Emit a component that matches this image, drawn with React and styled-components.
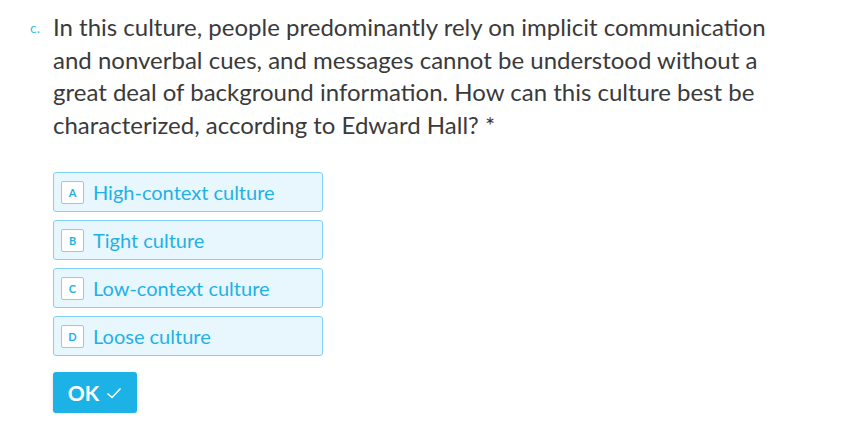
import React from "react";
import styled, { createGlobalStyle } from "styled-components";

const Global = createGlobalStyle`
  html, body { margin: 0; padding: 0; background: #ffffff; }
  body { font-family: Lato, "Open Sans", sans-serif; }
`;

const Page = styled.div`
  padding: 11px 0 0 30px;
`;

const QuestionRow = styled.div`
  display: flex;
  align-items: flex-start;
`;

const Number = styled.div`
  width: 23px;
  flex: none;
  font-size: 14px;
  color: #3fc0ee;
  line-height: 32.5px;
  padding-top: 1px;
`;

const QuestionText = styled.div`
  width: 724px;
  font-size: 24px;
  line-height: 32.5px;
  color: #3a3a3a;
`;

const Options = styled.div`
  display: flex;
  flex-direction: column;
  gap: 8px;
  margin: 31px 0 0 23px;
  width: 270px;
`;

const Option = styled.div`
  box-sizing: border-box;
  height: 40px;
  display: flex;
  align-items: center;
  gap: 9px;
  padding: 0 7px;
  background: #e8f7fd;
  border: 1px solid #7fd2f1;
  border-radius: 3px;
  color: #1fb1e6;
  font-size: 20px;
`;

const Key = styled.span`
  box-sizing: border-box;
  width: 23px;
  height: 23px;
  display: flex;
  align-items: center;
  justify-content: center;
  background: #ffffff;
  border: 1px solid #7fd2f1;
  border-radius: 2px;
  font-size: 11px;
  font-weight: 700;
  color: #1fb1e6;
`;

const OkButton = styled.button`
  margin: 16px 0 0 23px;
  width: 84px;
  height: 41px;
  border: none;
  border-radius: 3px;
  background: #1cb2e6;
  color: #ffffff;
  font-family: Lato, sans-serif;
  font-weight: 700;
  font-size: 21px;
  display: flex;
  align-items: center;
  justify-content: center;
  gap: 7px;
  padding: 0;
  box-shadow: 0 2px 5px rgba(0, 0, 0, 0.12);
`;

const options = [
  ["A", "High-context culture"],
  ["B", "Tight culture"],
  ["C", "Low-context culture"],
  ["D", "Loose culture"],
];

export default function App() {
  return (
    <Page>
      <Global />
      <QuestionRow>
        <Number>c.</Number>
        <QuestionText>
          In this culture, people predominantly rely on implicit communication
          and nonverbal cues, and messages cannot be understood without a great
          deal of background information. How can this culture best be
          characterized, according to Edward Hall? *
        </QuestionText>
      </QuestionRow>
      <Options>
        {options.map(([k, t]) => (
          <Option key={k}>
            <Key>{k}</Key>
            <span>{t}</span>
          </Option>
        ))}
      </Options>
      <OkButton>
        OK
        <svg width="16" height="14" viewBox="0 0 16 14" fill="none">
          <path d="M1.5 7.5 L6 11.5 L14.5 2.5" stroke="#fff" strokeWidth="1.6" />
        </svg>
      </OkButton>
    </Page>
  );
}
